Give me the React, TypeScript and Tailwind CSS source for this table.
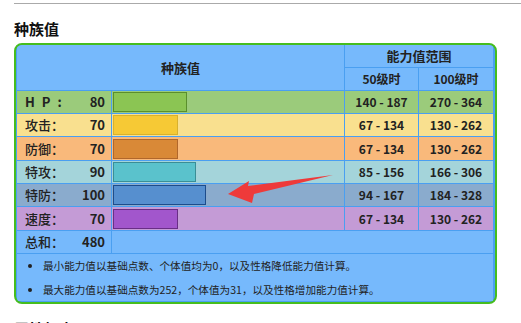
import React from "react";

const stats = [
  { label: "H P :", value: 80, lv50: "140 - 187", lv100: "270 - 364", row: "bg-[#9bcb7b]", bar: "bg-[#8bc553] border-[#5a8f2c]", h: "h-[22px]" },
  { label: "攻击：", value: 70, lv50: "67 - 134", lv100: "130 - 262", row: "bg-[#f9e08f]", bar: "bg-[#f6c935] border-[#d8b12d]", h: "h-[22px]" },
  { label: "防御：", value: 70, lv50: "67 - 134", lv100: "130 - 262", row: "bg-[#f9b97b]", bar: "bg-[#d98937] border-[#b1672b]", h: "h-[23px]" },
  { label: "特攻：", value: 90, lv50: "85 - 156", lv100: "166 - 306", row: "bg-[#a4d4da]", bar: "bg-[#5ac2cc] border-[#3a8e96]", h: "h-[22px]" },
  { label: "特防：", value: 100, lv50: "94 - 167", lv100: "184 - 328", row: "bg-[#8aabcd]", bar: "bg-[#568fcf] border-[#1d4c8b]", h: "h-[22px]" },
  { label: "速度：", value: 70, lv50: "67 - 134", lv100: "130 - 262", row: "bg-[#c49bd6]", bar: "bg-[#a256cc] border-[#692e86]", h: "h-[23px]" },
];

function StatRow({ s }: { s: (typeof stats)[number] }) {
  return (
    <>
      <div className={`${s.row} ${s.h} flex items-center justify-between pl-[8px] pr-[6px] text-[13px] text-[#222]`}>
        <span className={s.label.startsWith("H") ? "font-bold tracking-[2px]" : "font-medium"}>{s.label}</span>
        <span className="font-bold">{s.value}</span>
      </div>
      <div className={`${s.row} ${s.h} flex items-center pl-px`}>
        {/* 柱子宽度按种族值换算 */}
        <div className={`h-[20px] border ${s.bar}`} style={{ width: Math.round(s.value * 0.925) }} />
      </div>
      <div className={`${s.row} ${s.h} flex items-center justify-center text-[12px] font-bold text-[#222]`}>{s.lv50}</div>
      <div className={`${s.row} ${s.h} flex items-center justify-center text-[12px] font-bold text-[#222]`}>{s.lv100}</div>
    </>
  );
}

export default function App() {
  return (
    <div
      className="relative h-[323px] overflow-hidden bg-white"
      style={{ fontFamily: '"Noto Sans CJK SC", "Liberation Sans", sans-serif' }}
    >
      <div className="ml-[14px] mt-[3px] h-px bg-[#aaaaaa]" />
      <h2 className="ml-[14px] mt-[14px] text-[15px] font-bold leading-[22px] text-[#111]">种族值</h2>

      <div className="ml-[14px] mt-[3px] w-[483px] rounded-[8px] border-2 border-[#46bd1e] bg-[#4a9ff1] overflow-hidden">
        <div className="grid grid-cols-[94px_232px_73px_74px] gap-px pl-px pr-[2px] pb-px">
          {/* 表头 */}
          <div className="col-span-2 row-span-2 flex items-center justify-center bg-[#76b9fc] text-[13px] font-bold text-[#222]">
            种族值
          </div>
          <div className="col-span-2 h-[22px] flex items-center justify-center bg-[#76b9fc] text-[13px] font-bold text-[#222]">
            能力值范围
          </div>
          <div className="h-[22px] flex items-center justify-center bg-[#76b9fc] text-[12px] font-bold text-[#222]">50级时</div>
          <div className="h-[22px] flex items-center justify-center bg-[#76b9fc] text-[12px] font-bold text-[#222]">100级时</div>

          {stats.map((s) => (
            <StatRow key={s.label} s={s} />
          ))}

          <div className="h-[22px] flex items-center justify-between bg-[#76b9fc] pl-[8px] pr-[6px] text-[13px] text-[#222]">
            <span className="font-medium">总和：</span>
            <span className="font-bold">480</span>
          </div>
          <div className="col-span-3 h-[22px] bg-[#76b9fc]" />

          <div className="col-span-4 h-[47px] bg-[#76b9fc] pl-[26px]">
            <ul className="list-disc text-[10.6px] leading-[24px] text-[#222]">
              <li>最小能力值以基础点数、个体值均为0，以及性格降低能力值计算。</li>
              <li>最大能力值以基础点数为252，个体值为31，以及性格增加能力值计算。</li>
            </ul>
          </div>
        </div>
      </div>

      <h2 className="ml-[14px] mt-[14px] text-[15px] font-bold leading-[22px] text-[#111]">属性相克</h2>

      {/* 红色箭头 */}
      <svg className="pointer-events-none absolute left-0 top-0" width="521" height="323" viewBox="0 0 521 323">
        <polygon points="228,194 249,181 248,186 333,175 254,194 252,203" fill="#ee3a3a" />
      </svg>
    </div>
  );
}
